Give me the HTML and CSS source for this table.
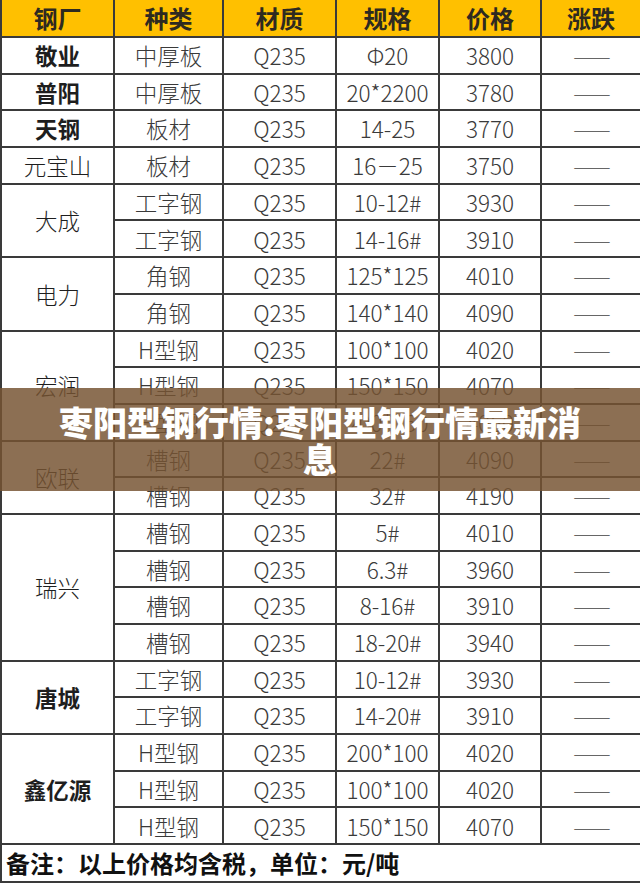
FILE: index.html
```html
<!DOCTYPE html>
<html lang="zh-CN">
<head>
<meta charset="utf-8">
<title>枣阳型钢行情</title>
<link rel="stylesheet" href="styles.css">
</head>
<body>
<div class="page">
  <table class="price-table">
    <colgroup>
      <col class="c1"><col class="c2"><col class="c3"><col class="c4"><col class="c5"><col class="c6">
    </colgroup>
    <thead>
      <tr class="head"><th>钢厂</th><th>种类</th><th>材质</th><th>规格</th><th>价格</th><th>涨跌</th></tr>
    </thead>
    <tbody>
      <tr><td class="mill b">敬业</td><td>中厚板</td><td>Q235</td><td>Φ20</td><td>3800</td><td class="dash">——</td></tr>
      <tr><td class="mill b">普阳</td><td>中厚板</td><td>Q235</td><td>20*2200</td><td>3780</td><td class="dash">——</td></tr>
      <tr><td class="mill b">天钢</td><td>板材</td><td>Q235</td><td>14-25</td><td>3770</td><td class="dash">——</td></tr>
      <tr><td class="mill">元宝山</td><td>板材</td><td>Q235</td><td>16－25</td><td>3750</td><td class="dash">——</td></tr>
      <tr><td class="mill" rowspan="2">大成</td><td>工字钢</td><td>Q235</td><td>10-12#</td><td>3930</td><td class="dash">——</td></tr>
      <tr><td>工字钢</td><td>Q235</td><td>14-16#</td><td>3910</td><td class="dash">——</td></tr>
      <tr><td class="mill" rowspan="2">电力</td><td>角钢</td><td>Q235</td><td>125*125</td><td>4010</td><td class="dash">——</td></tr>
      <tr><td>角钢</td><td>Q235</td><td>140*140</td><td>4090</td><td class="dash">——</td></tr>
      <tr><td class="mill" rowspan="3">宏润</td><td>H型钢</td><td>Q235</td><td>100*100</td><td>4020</td><td class="dash">——</td></tr>
      <tr><td>H型钢</td><td>Q235</td><td>150*150</td><td>4070</td><td class="dash">——</td></tr>
      <tr><td>H型钢</td><td>Q235</td><td>200*150</td><td>4060</td><td class="dash">——</td></tr>
      <tr><td class="mill" rowspan="2">欧联</td><td>槽钢</td><td>Q235</td><td>22#</td><td>4090</td><td class="dash">——</td></tr>
      <tr><td>槽钢</td><td>Q235</td><td>32#</td><td>4190</td><td class="dash">——</td></tr>
      <tr><td class="mill" rowspan="4">瑞兴</td><td>槽钢</td><td>Q235</td><td>5#</td><td>4010</td><td class="dash">——</td></tr>
      <tr><td>槽钢</td><td>Q235</td><td>6.3#</td><td>3960</td><td class="dash">——</td></tr>
      <tr><td>槽钢</td><td>Q235</td><td>8-16#</td><td>3910</td><td class="dash">——</td></tr>
      <tr><td>槽钢</td><td>Q235</td><td>18-20#</td><td>3940</td><td class="dash">——</td></tr>
      <tr><td class="mill b" rowspan="2">唐城</td><td>工字钢</td><td>Q235</td><td>10-12#</td><td>3930</td><td class="dash">——</td></tr>
      <tr><td>工字钢</td><td>Q235</td><td>14-20#</td><td>3910</td><td class="dash">——</td></tr>
      <tr><td class="mill b" rowspan="3">鑫亿源</td><td>H型钢</td><td>Q235</td><td>200*100</td><td>4020</td><td class="dash">——</td></tr>
      <tr><td>H型钢</td><td>Q235</td><td>100*100</td><td>4020</td><td class="dash">——</td></tr>
      <tr><td>H型钢</td><td>Q235</td><td>150*150</td><td>4070</td><td class="dash">——</td></tr>
    </tbody>
    <tfoot>
      <tr class="foot"><td colspan="6">备注：以上价格均含税，单位：元/吨</td></tr>
    </tfoot>
  </table>
  <div class="banner">
    <h1 class="banner-title">枣阳型钢行情:枣阳型钢行情最新消息</h1>
  </div>
</div>
</body>
</html>
```

FILE: styles.css
```css
html, body {
  margin: 0;
  padding: 0;
  background: #ffffff;
}

.page {
  position: relative;
  width: 640px;
  height: 883px;
  overflow: hidden;
  font-family: "Noto Sans CJK SC", "Noto Sans", sans-serif;
}

.price-table {
  width: 640px;
  table-layout: fixed;
  border-collapse: collapse;
  color: #3a3a3a;
}

.c1 { width: 113px; }
.c2 { width: 109px; }
.c3 { width: 113px; }
.c4 { width: 103px; }
.c5 { width: 102px; }
.c6 { width: 100px; }

.price-table th,
.price-table td {
  border: 2px solid #3a3a3a;
  padding: 0;
  text-align: center;
  vertical-align: middle;
  font-size: 22.5px;
  line-height: 1;
  font-weight: 300;
  white-space: nowrap;
}

.price-table thead th {
  border-top: none;
}

.head th {
  height: 36px;
  background: #ffc000;
  color: #2e2a20;
  font-size: 24px;
  font-weight: 700;
}

.price-table tbody tr {
  height: 36.7px;
}

.mill {
  color: #1e1e1e;
  font-weight: 400;
}

.mill.b {
  font-weight: 700;
}

.dash {
  color: #666666;
  letter-spacing: -2px;
}

.foot td {
  height: 36px;
  text-align: left;
  padding-left: 4px;
  font-size: 24px;
  font-weight: 700;
  color: #111111;
}

.banner {
  position: absolute;
  left: 0;
  top: 388px;
  width: 640px;
  height: 103px;
  background: rgba(118, 84, 50, 0.84);
  display: flex;
  align-items: center;
  justify-content: center;
  padding: 0 50px;
  box-sizing: border-box;
}

.banner-title {
  margin: 0;
  color: #ffffff;
  font-size: 34px;
  line-height: 37px;
  font-weight: 900;
  text-align: center;
}
```
